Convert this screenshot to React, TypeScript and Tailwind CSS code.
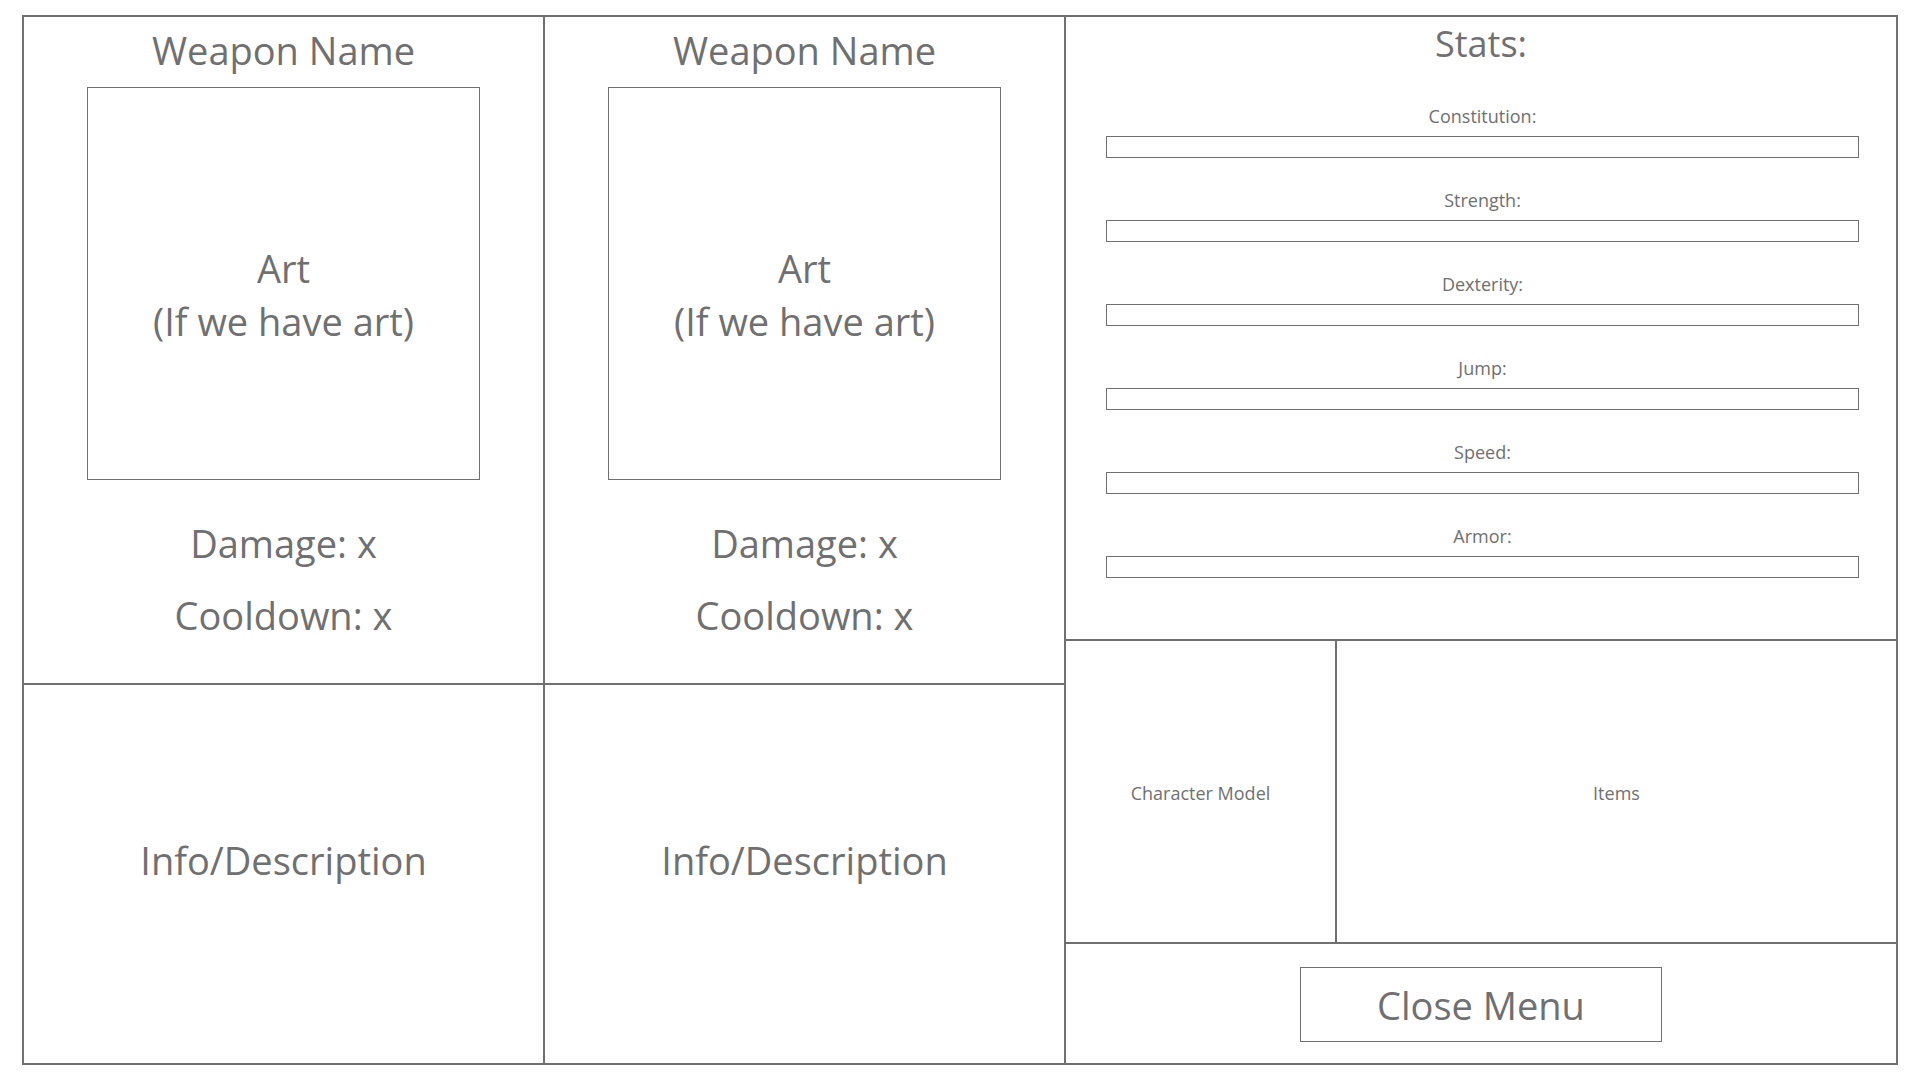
import React from "react";

const stats = ["Constitution:", "Strength:", "Dexterity:", "Jump:", "Speed:", "Armor:"];

const WeaponColumn = () => {
  return (
    <div className="flex flex-col w-[521px] h-full border-r-2 border-[#707070]">
      {/* top card */}
      <div className="h-[668px] border-b-2 border-[#707070] flex flex-col items-center">
        <div className="mt-[9px] h-[48px] leading-[48px] text-[38px]">Weapon Name</div>
        <div className="mt-[13px] w-[393px] h-[393px] border border-[#707070] flex flex-col items-center pt-[154px] text-[38px] leading-[53px]">
          <div>Art</div>
          <div>(If we have art)</div>
        </div>
        <div className="mt-[27px] text-[38px] leading-[72px]">Damage: x</div>
        <div className="text-[38px] leading-[72px]">Cooldown: x</div>
      </div>
      {/* info */}
      <div className="flex-1 flex justify-center pt-[149px]">
        <div className="text-[38px] leading-[52px]">Info/Description</div>
      </div>
    </div>
  );
};

export default function App() {
  return (
    <div
      className="w-[1920px] h-[1080px] bg-white pt-[15px] pl-[22px] text-[#707070]"
      style={{ fontFamily: '"Open Sans", "Noto Sans", sans-serif' }}
    >
      <div className="w-[1876px] h-[1050px] border-2 border-[#707070] flex">
        <WeaponColumn />
        <WeaponColumn />
        <div className="flex-1 flex flex-col">
          {/* stats */}
          <div className="h-[624px] border-b-2 border-[#707070] flex flex-col items-center">
            <div className="mt-[3px] text-[36px] leading-[48px]">Stats:</div>
            <div className="mt-[36px] w-full pl-[40px] pr-[37px] flex flex-col gap-[30px]">
              {stats.map((s) => (
                <div key={s} className="flex flex-col items-center">
                  <div className="text-[18px] leading-[24px]">{s}</div>
                  <div className="mt-[8px] w-full h-[22px] border border-[#707070]" />
                </div>
              ))}
            </div>
          </div>
          {/* model / items */}
          <div className="h-[303px] border-b-2 border-[#707070] flex">
            <div className="w-[271px] border-r-2 border-[#707070] flex items-center justify-center text-[18px] pt-[4px]">
              Character Model
            </div>
            <div className="flex-1 flex items-center justify-center text-[18px] pt-[4px]">Items</div>
          </div>
          {/* close */}
          <div className="flex-1 flex items-center justify-center">
            <button className="mt-[2px] w-[362px] h-[75px] border border-[#707070] text-[38px] text-[#707070] pt-[2px]">
              Close Menu
            </button>
          </div>
        </div>
      </div>
    </div>
  );
}
